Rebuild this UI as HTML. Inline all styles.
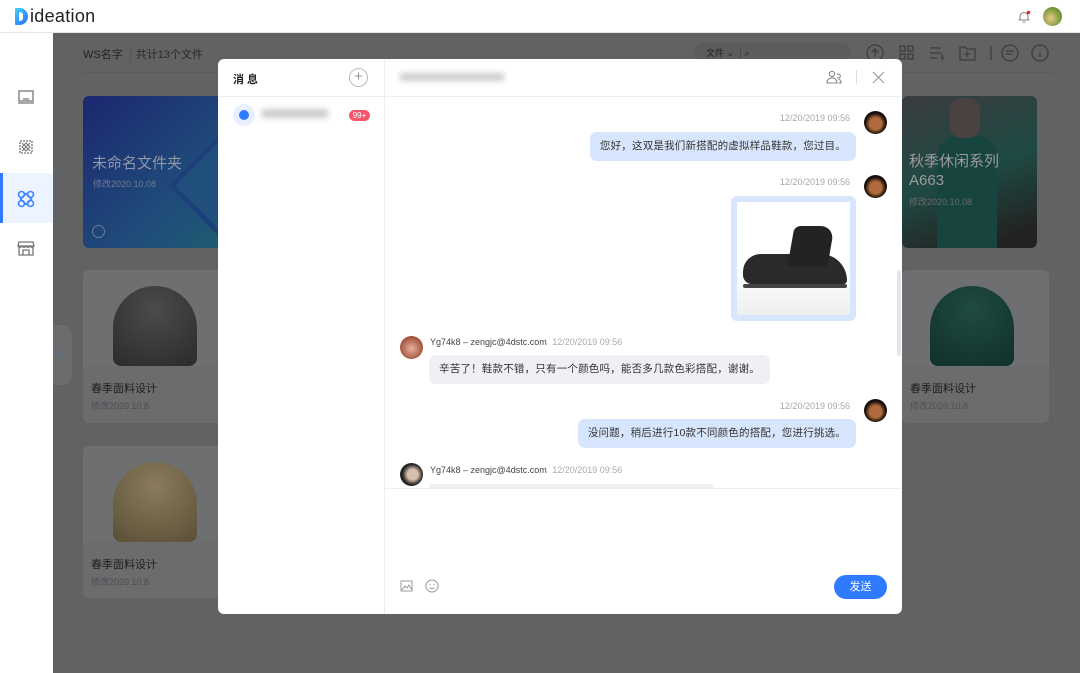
<!DOCTYPE html>
<html><head><meta charset="utf-8"><style>
*{margin:0;padding:0;box-sizing:border-box}
body{width:1080px;height:673px;overflow:hidden;position:relative;background:#616264;font-family:"Liberation Sans","Noto Sans CJK SC",sans-serif;}
.abs{position:absolute}
.hdr{left:0;top:0;width:1080px;height:33px;background:#fff;border-bottom:1px solid #e8e8e8}
.side{left:0;top:33px;width:53px;height:640px;background:#fff}
.card{position:absolute;background:#6b6c6e;border-radius:6px;overflow:hidden}
.card .img{position:absolute;left:0;top:0;right:0;height:96px;background:#6e6f71}
.card .t{position:absolute;left:8px;top:110px;font-size:11px;color:#1e1e1e}
.card .d{position:absolute;left:8px;top:129px;font-size:9px;color:#4d4e50}
.dome{position:absolute;width:84px;height:80px;border-radius:42px 42px 8px 8px;left:30px;top:16px}
.modal{left:218px;top:59px;width:684px;height:555px;background:#fff;border-radius:6px;overflow:hidden}
.time{position:absolute;font-size:9px;color:#a9a9a9;right:52px}
.bub{position:absolute;font-size:10.5px;letter-spacing:0.2px;color:#333;border-radius:7px;padding:0 10px;line-height:29px;white-space:nowrap}
.me{background:#d8e6fd;right:46px}
.ot{background:#eef0f3}
.av{position:absolute;width:23px;height:23px;border-radius:50%}
.ico{position:absolute}
</style></head><body>
<!-- header -->
<div class="abs hdr">
 <div class="abs" style="left:15px;top:8px;width:13px;height:17px;background:linear-gradient(135deg,#3fd0ff,#2a6bf5);border-radius:1px 9px 9px 1px"></div>
 <div class="abs" style="left:19px;top:12px;width:4px;height:9px;background:#fff;border-radius:0 3px 3px 0"></div>
 <div class="abs" style="left:30px;top:6px;font-size:18px;color:#222;letter-spacing:0.3px">ideation</div>
 <svg class="ico" style="left:1017px;top:10px" width="14" height="14" viewBox="0 0 14 14"><path d="M3 10V6.5a4 4 0 0 1 8 0V10h1.5M1.5 10H12M5.5 12h3" fill="none" stroke="#888" stroke-width="1.1"/><circle cx="11.5" cy="2.5" r="1.8" fill="#f5222d"/></svg>
 <div class="abs" style="left:1043px;top:7px;width:19px;height:19px;border-radius:50%;background:radial-gradient(circle at 40% 60%,#e8c78d,#7a9c3a 60%,#4d6b28)"></div>
</div>
<!-- sidebar -->
<div class="abs side">
 <svg class="ico" style="left:17px;top:56px" width="18" height="16" viewBox="0 0 18 16"><rect x="2" y="2" width="14" height="10" fill="none" stroke="#777" stroke-width="1.3"/><path d="M1 14h16M6 10h6" stroke="#777" stroke-width="1.3"/></svg>
 <svg class="ico" style="left:18px;top:106px" width="16" height="16" viewBox="0 0 16 16"><path d="M2 2h12v12H2z" fill="none" stroke="#777" stroke-width="1.3" stroke-dasharray="2 1"/><path d="M4 4l8 8M12 4l-8 8M4 8l4-4 4 4-4 4z" fill="none" stroke="#777" stroke-width="1"/></svg>
 <div class="abs" style="left:0;top:140px;width:53px;height:50px;background:#eef4ff"></div>
 <div class="abs" style="left:0;top:140px;width:3px;height:50px;background:#2f7bff"></div>
 <svg class="ico" style="left:17px;top:157px" width="18" height="18" viewBox="0 0 18 18"><g fill="none" stroke="#3a86ff" stroke-width="1.6"><path d="M9 3.5l5.5 5.5L9 14.5 3.5 9z"/><circle cx="4.5" cy="4.5" r="3"/><circle cx="13.5" cy="4.5" r="3"/><circle cx="4.5" cy="13.5" r="3"/><circle cx="13.5" cy="13.5" r="3"/></g></svg>
 <svg class="ico" style="left:17px;top:207px" width="18" height="16" viewBox="0 0 18 16"><path d="M2 2h14l1 4H1zM2 6v9h14V6M6 15v-5h6v5M1 6q2 3 4 0 2 3 4 0 2 3 4 0 2 3 4 0" fill="none" stroke="#777" stroke-width="1.3"/></svg>
</div>
<!-- collapse tab -->
<div class="abs" style="left:53px;top:325px;width:19px;height:60px;background:#6b6c6e;border-radius:0 10px 10px 0"></div>
<div class="abs" style="left:57px;top:346px;font-size:12px;color:#3d6fbf">›</div>
<!-- toolbar -->
<div class="abs" style="left:83px;top:46px;font-size:11px;color:#222">WS名字 <span style="color:#2a2a2a;margin-left:4px;border-left:1px solid #555;padding-left:5px">共计13个文件</span></div>
<div class="abs" style="left:83px;top:72px;width:970px;height:1px;background:#5a5b5d"></div>
<div class="abs" style="left:694px;top:43px;width:157px;height:19px;border-radius:10px;background:#5b5c5e;font-size:9px;color:#222;padding:3px 12px">文件 ⌄ <span style="border-left:1px solid #4a4a4a;margin-left:3px;padding-left:4px">⌕</span></div>
<svg class="ico" style="left:866px;top:44px" width="184" height="18" viewBox="0 0 184 18"><g fill="none" stroke="#3c3d3f" stroke-width="1.3"><circle cx="9" cy="9" r="8"/><path d="M9 13V5M5.5 8.5L9 5l3.5 3.5"/><rect x="34" y="2" width="5" height="5"/><rect x="42" y="2" width="5" height="5"/><rect x="34" y="10" width="5" height="5"/><rect x="42" y="10" width="5" height="5"/><path d="M64 4h11M64 9h11M64 14h7M76 10v5l2-2"/><path d="M94 3h5l2 2h8v11H94z M101 7v6M98 10h6"/><path d="M125 2v14"/><circle cx="144" cy="9" r="8"/><path d="M140 7h8M140 10h6"/><circle cx="174" cy="9" r="8"/><path d="M174 8v5M174 5v1"/></g></svg>
<!-- cards row1 -->
<div class="card" style="left:83px;top:96px;width:150px;height:152px;background:linear-gradient(135deg,#1c2770,#1f4a7a 60%,#1f5d70)">
 <div class="abs" style="left:100px;top:55px;width:70px;height:70px;transform:rotate(45deg);background:#1f4f7a;border:5px solid #1d3f7a"></div>
 <div class="abs" style="left:9px;top:56px;font-size:15px;color:#8f97a8">未命名文件夹</div>
 <div class="abs" style="left:10px;top:81px;font-size:9px;color:#6f7c92">修改2020.10.08</div>
 <div class="abs" style="left:9px;top:129px;width:13px;height:13px;border:1px solid #6f7c92;border-radius:50%"></div>
</div>
<div class="card" style="left:902px;top:96px;width:135px;height:152px;background:linear-gradient(160deg,#3a3b3e,#1f4a44 50%,#222 90%)">
 <div class="abs" style="left:35px;top:40px;width:60px;height:112px;background:#17443f;border-radius:20px 20px 0 0"></div>
 <div class="abs" style="left:48px;top:2px;width:30px;height:40px;background:#4a4240;border-radius:12px"></div>
 <div class="abs" style="left:7px;top:56px;font-size:15px;color:#9a9b9d;line-height:19px">秋季休闲系列<br>A663</div>
 <div class="abs" style="left:7px;top:99px;font-size:9px;color:#6a6b6d">修改2020.10.08</div>
</div>
<!-- cards row2/3 -->
<div class="card" style="left:83px;top:270px;width:150px;height:153px"><div class="img"></div><div class="dome" style="background:radial-gradient(circle at 50% 30%,#4a4b4c,#2a2b2c)"></div><div class="t">春季面料设计</div><div class="d">修改2020.10.8</div></div>
<div class="card" style="left:83px;top:446px;width:150px;height:152px"><div class="img"></div><div class="dome" style="background:radial-gradient(circle at 50% 30%,#8a7c5c,#5a4f36)"></div><div class="t">春季面料设计</div><div class="d">修改2020.10.8</div></div>
<div class="card" style="left:902px;top:270px;width:147px;height:153px"><div class="img"></div><div class="dome" style="left:28px;background:radial-gradient(circle at 50% 30%,#1f4a42,#10302a)"></div><div class="t">春季面料设计</div><div class="d">修改2020.10.8</div></div>
<!-- modal -->
<div class="abs modal">
 <div class="abs" style="left:166px;top:0;width:1px;height:555px;background:#eee"></div>
 <div class="abs" style="left:0;top:37px;width:684px;height:1px;background:#eee"></div>
 <div class="abs" style="left:15px;top:12px;font-size:11px;color:#222;letter-spacing:3px;font-weight:bold">消息</div>
 <div class="abs" style="left:131px;top:9px;width:19px;height:19px;border:1px solid #bbb;border-radius:50%;text-align:center;font-size:15px;line-height:16px;color:#999">+</div>
 <div class="abs" style="left:15px;top:45px;width:22px;height:22px;border-radius:50%;background:#e8f0ff"></div>
 <div class="abs" style="left:21px;top:51px;width:10px;height:10px;border-radius:50%;background:#2f7bff"></div>
 <div class="abs" style="left:44px;top:50px;width:66px;height:9px;background:#ccc;filter:blur(3px)"></div>
 <div class="abs" style="left:131px;top:51px;width:21px;height:11px;border-radius:6px;background:#f5566b;color:#fff;font-size:8px;text-align:center;line-height:11px">99+</div>
 <div class="abs" style="left:182px;top:14px;width:104px;height:8px;background:#ccc;filter:blur(3px)"></div>
 <svg class="ico" style="left:608px;top:11px" width="16" height="14" viewBox="0 0 16 14"><g fill="none" stroke="#888" stroke-width="1.1"><circle cx="6" cy="4" r="2.7"/><path d="M1 13c0-3 2-5 5-5s5 2 5 5zM11 4.5a2 2 0 1 1 0 3M12.5 13H15c0-2-1-3.5-2.5-4"/></g></svg>
 <div class="abs" style="left:638px;top:11px;width:1px;height:14px;background:#ddd"></div>
 <svg class="ico" style="left:654px;top:12px" width="13" height="13" viewBox="0 0 13 13"><path d="M1 1l11 11M12 1L1 12" stroke="#999" stroke-width="1.1"/></svg>
 <!-- messages -->
 <div class="time" style="top:54px">12/20/2019 09:56</div>
 <div class="av" style="left:646px;top:52px;background:radial-gradient(circle at 50% 55%,#b06a3e 35%,#1a0f0a 60%)"></div>
 <div class="bub me" style="top:73px">您好，这双是我们新搭配的虚拟样品鞋款，您过目。</div>
 <div class="time" style="top:118px">12/20/2019 09:56</div>
 <div class="av" style="left:646px;top:116px;background:radial-gradient(circle at 50% 55%,#b06a3e 35%,#1a0f0a 60%)"></div>
 <div class="abs" style="left:513px;top:137px;width:125px;height:125px;border-radius:6px;background:#d8e6fd;padding:6px"><div style="width:113px;height:113px;background:linear-gradient(#fff 60%,#eee);position:relative">
  <div class="abs" style="left:6px;top:52px;width:104px;height:30px;background:#2a2a2c;border-radius:20px 30px 4px 10px"></div>
  <div class="abs" style="left:54px;top:24px;width:40px;height:40px;background:#232325;border-radius:6px 14px 0 0;transform:skewX(-10deg)"></div>
  <div class="abs" style="left:6px;top:82px;width:104px;height:4px;background:#444;border-radius:2px"></div>
 </div></div>
 <div class="av" style="left:182px;top:277px;background:radial-gradient(circle at 50% 55%,#e8b09a,#a0503a 70%)"></div>
 <div class="abs" style="left:212px;top:278px;font-size:9px;color:#444">Yg74k8 – zengjc@4dstc.com <span style="color:#aaa;margin-left:3px">12/20/2019 09:56</span></div>
 <div class="bub ot" style="left:211px;top:296px">辛苦了！鞋款不错，只有一个颜色吗，能否多几款色彩搭配，谢谢。</div>
 <div class="time" style="top:342px">12/20/2019 09:56</div>
 <div class="av" style="left:646px;top:340px;background:radial-gradient(circle at 50% 55%,#b06a3e 35%,#1a0f0a 60%)"></div>
 <div class="bub me" style="top:360px">没问题，稍后进行10款不同颜色的搭配，您进行挑选。</div>
 <div class="av" style="left:182px;top:404px;background:radial-gradient(circle at 55% 50%,#d8c0b0 30%,#222 60%)"></div>
 <div class="abs" style="left:212px;top:406px;font-size:9px;color:#444">Yg74k8 – zengjc@4dstc.com <span style="color:#aaa;margin-left:3px">12/20/2019 09:56</span></div>
 <div class="abs" style="left:211px;top:425px;width:285px;height:4px;border-radius:4px 4px 0 0;background:#eef0f3"></div>
 <div class="abs" style="left:167px;top:429px;width:517px;height:1px;background:#eee"></div>
 <div class="abs" style="left:679px;top:211px;width:4px;height:86px;border-radius:2px;background:#e4e6ea"></div>
 <svg class="ico" style="left:182px;top:521px" width="13" height="12" viewBox="0 0 13 12"><rect x="1" y="1" width="11" height="10" fill="none" stroke="#999"/><path d="M2 10l3-4 2 2 2-3 3 5" fill="none" stroke="#999"/></svg>
 <svg class="ico" style="left:207px;top:520px" width="14" height="14" viewBox="0 0 14 14"><circle cx="7" cy="7" r="6" fill="none" stroke="#999"/><path d="M4.5 8.5q2.5 2.5 5 0" fill="none" stroke="#999"/><circle cx="5" cy="5.5" r=".6" fill="#999"/><circle cx="9" cy="5.5" r=".6" fill="#999"/></svg>
 <div class="abs" style="left:616px;top:516px;width:53px;height:24px;border-radius:12px;background:#2f7bff;color:#fff;font-size:11px;text-align:center;line-height:24px">发送</div>
</div>
</body></html>
